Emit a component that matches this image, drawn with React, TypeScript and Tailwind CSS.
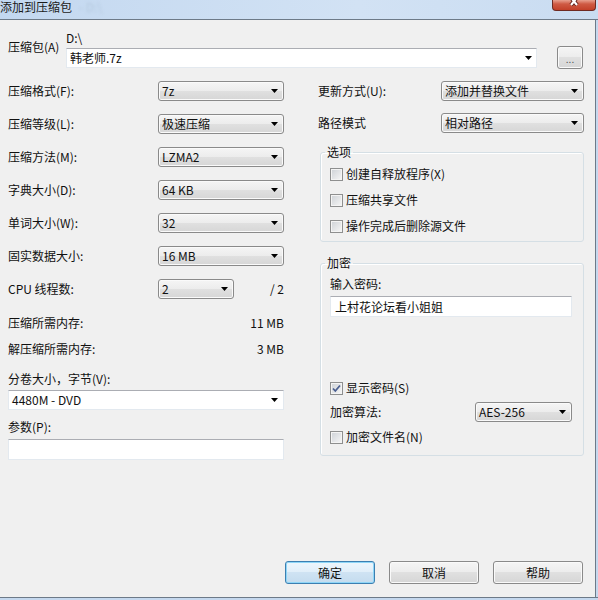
import type { ReactNode } from "react";

function Arrow() {
  return (
    <svg width="7" height="4" viewBox="0 0 7 4" className="shrink-0">
      <path d="M0 0h7L3.5 4z" fill="#000" />
    </svg>
  );
}

// raised drop-down list (read only)
function Select({ value, className = "" }: { value: string; className?: string }) {
  return (
    <div
      className={`flex h-[20px] items-center justify-between rounded-[3px] border border-[#8a8a8a] bg-[linear-gradient(#f5f5f5,#ececec_50%,#e0e0e0_50%,#d6d6d6)] pl-[3px] pr-[5px] shadow-[inset_0_0_0_1px_#fafafa] ${className}`}
    >
      <span className="whitespace-nowrap">{value}</span>
      <Arrow />
    </div>
  );
}

// flat editable combo box
function ComboEdit({ value, className = "" }: { value: string; className?: string }) {
  return (
    <div
      className={`flex h-[20px] items-center justify-between border border-[#e3e9ef] border-t-[#abadb3] bg-white pl-[3px] pr-[4px] ${className}`}
    >
      <span className="whitespace-nowrap">{value}</span>
      <Arrow />
    </div>
  );
}

function TextBox({ value = "", className = "" }: { value?: string; className?: string }) {
  return (
    <div
      className={`flex h-[21px] items-center border border-[#e3e9ef] border-t-[#abadb3] bg-white pl-[3px] ${className}`}
    >
      {value}
    </div>
  );
}

function Check({ label, checked = false }: { label: ReactNode; checked?: boolean }) {
  return (
    <div className="flex h-[14px] items-center gap-[3px]">
      <span className="flex h-[13px] w-[13px] shrink-0 items-center justify-center border border-[#8e8f8f] bg-[linear-gradient(135deg,#cdd1d6,#f7f7f7)] shadow-[inset_0_0_0_1px_#f4f4f4]">
        {checked && (
          <svg width="11" height="11" viewBox="0 0 11 11">
            <path d="M2 5.5 4.3 8 9 2.5" fill="none" stroke="#4b5f90" strokeWidth="1.8" />
          </svg>
        )}
      </span>
      <span>{label}</span>
    </div>
  );
}

function Button({ children, primary = false }: { children: ReactNode; primary?: boolean }) {
  return (
    <button
      className={
        primary
          ? "flex h-[23px] w-[90px] items-center justify-center rounded-[3px] border border-[#3c7fb1] bg-[linear-gradient(#eef6fc,#e0eef9_50%,#cfe3f3_50%,#c4dcee)] shadow-[inset_0_0_0_1px_#8fd6f7]"
          : "flex h-[23px] w-[90px] items-center justify-center rounded-[3px] border border-[#8a8a8a] bg-[linear-gradient(#f5f5f5,#ececec_50%,#e0e0e0_50%,#d6d6d6)] shadow-[inset_0_0_0_1px_#fafafa]"
      }
    >
      {children}
    </button>
  );
}

const leftRows = [
  ["压缩格式(F):", "7z"],
  ["压缩等级(L):", "极速压缩"],
  ["压缩方法(M):", "LZMA2"],
  ["字典大小(D):", "64 KB"],
  ["单词大小(W):", "32"],
  ["固实数据大小:", "16 MB"],
];

export default function App() {
  return (
    <div className="flex h-[600px] w-[598px] flex-col overflow-hidden bg-[#f0f0f0] font-['Noto_Sans_CJK_SC',sans-serif] text-[12px] leading-[14px] text-[#111]">
      {/* title bar */}
      <div className="flex h-[19px] shrink-0 items-start bg-[linear-gradient(90deg,#c3d8f0,#d2e2f4_60%,#c9dcf1)]">
        <span className="text-[#1b1b1b]">添加到压缩包</span>
        <span className="ml-[7px] text-[#b4c8de] blur-[1.5px]">- D:\</span>
        <div className="ml-auto mr-[2px] h-[11px] w-[44px] overflow-hidden rounded-b-[4px] border border-t-0 border-[#6e2a22] bg-[linear-gradient(#e8a08f,#cf5a44_40%,#c24029)]">
          <svg width="42" height="10" viewBox="0 0 42 10">
            <path d="M15 -6 24 5M27 -6 18 5" stroke="#5e1c14" strokeWidth="4" />
            <path d="M15 -6 24 5M27 -6 18 5" stroke="#fff" strokeWidth="2.2" />
          </svg>
        </div>
      </div>
      <div className="h-px shrink-0 bg-[#6d7a88]" />

      <div className="flex min-h-0 flex-1">
        <div className="flex flex-1 flex-col pl-[8px] pr-[11px]">
          {/* archive */}
          <div className="flex items-start pt-[11px]">
            <span className="mt-[9px] w-[58px] shrink-0">压缩包(A)</span>
            <div className="flex w-[471px] flex-col">
              <span>D:\</span>
              <ComboEdit value="韩老师.7z" className="mt-[3px]" />
            </div>
            <button className="ml-[20px] mt-[15px] flex h-[23px] w-[26px] items-end justify-center rounded-[3px] border border-[#8a8a8a] bg-[linear-gradient(#f5f5f5,#ececec_50%,#e0e0e0_50%,#d6d6d6)] pb-[4px] text-[10px] leading-[10px] text-[#555] shadow-[inset_0_0_0_1px_#fafafa]">
              ...
            </button>
          </div>

          <div className="mt-[12px] grid grid-cols-[276px_266px] gap-x-[34px]">
            {/* left column */}
            <div className="flex flex-col">
              <div className="flex flex-col gap-[13px]">
                {leftRows.map(([label, value]) => (
                  <div key={label} className="flex items-center">
                    <span className="w-[150px] shrink-0">{label}</span>
                    <Select value={value} className="w-[126px]" />
                  </div>
                ))}
                <div className="flex items-center">
                  <span className="w-[150px] shrink-0">CPU 线程数:</span>
                  <Select value="2" className="w-[76px]" />
                  <span className="ml-auto">/ 2</span>
                </div>
              </div>
              <div className="mt-[17px] flex justify-between">
                <span>压缩所需内存:</span>
                <span>11 MB</span>
              </div>
              <div className="mt-[12px] flex justify-between">
                <span>解压缩所需内存:</span>
                <span>3 MB</span>
              </div>
              <span className="mt-[16px]">分卷大小，字节(V):</span>
              <ComboEdit value="4480M - DVD" className="mt-[4px] pr-[5px]" />
              <span className="mt-[10px]">参数(P):</span>
              <TextBox className="mt-[5px]" />
            </div>

            {/* right column */}
            <div className="flex flex-col">
              <div className="flex items-center">
                <span className="w-[123px] shrink-0">更新方式(U):</span>
                <Select value="添加并替换文件" className="w-[143px]" />
              </div>
              <div className="mt-[12px] flex items-center">
                <span className="w-[123px] shrink-0">路径模式</span>
                <Select value="相对路径" className="w-[143px]" />
              </div>

              <fieldset className="ml-[2px] mt-[12px] flex flex-col rounded-[3px] border border-[#d5dfe5] pb-[8px] pl-[9px] pr-[11px] shadow-[inset_1px_1px_0_#fff]">
                <legend className="ml-[-5px] px-[2px]">选项</legend>
                <div className="mt-[8px] flex flex-col gap-[12px]">
                  <Check label="创建自释放程序(X)" />
                  <Check label="压缩共享文件" />
                  <Check label="操作完成后删除源文件" />
                </div>
              </fieldset>

              <fieldset className="ml-[2px] mt-[14px] flex flex-col rounded-[3px] border border-[#d5dfe5] pb-[11px] pl-[9px] pr-[11px] shadow-[inset_1px_1px_0_#fff]">
                <legend className="ml-[-5px] px-[2px]">加密</legend>
                <span className="mt-[7px]">输入密码:</span>
                <TextBox value="上村花论坛看小姐姐" className="mt-[5px] pl-[4px]" />
                <div className="mt-[64px]">
                  <Check label="显示密码(S)" checked />
                </div>
                <div className="mt-[7px] flex items-center justify-between">
                  <span>加密算法:</span>
                  <Select value="AES-256" className="w-[97px]" />
                </div>
                <div className="mt-[8px]">
                  <Check label="加密文件名(N)" />
                </div>
              </fieldset>
            </div>
          </div>

          {/* buttons */}
          <div className="mt-auto mr-[1px] flex justify-end gap-[14px] pb-[13px]">
            <Button primary>确定</Button>
            <Button>取消</Button>
            <Button>帮助</Button>
          </div>
        </div>
        <div className="w-[3px] shrink-0 border-l border-[#6d7a88] bg-[#c5d8ee]" />
      </div>
      <div className="h-[3px] shrink-0 border-t border-[#6d7a88] bg-[#c5d8ee]" />
    </div>
  );
}
